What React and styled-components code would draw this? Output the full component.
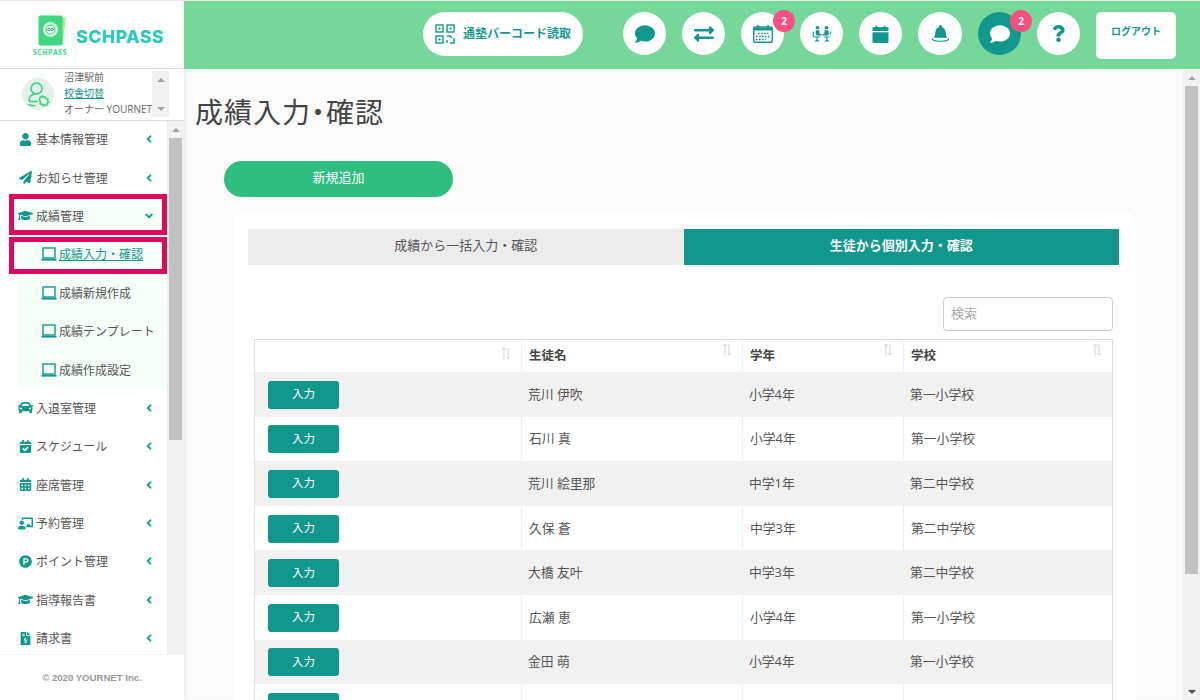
import React from "react";
import styled, { createGlobalStyle } from "styled-components";
import {
  FaUser, FaPaperPlane, FaGraduationCap, FaCar, FaCalendarCheck, FaCalendarAlt,
  FaChalkboardTeacher, FaProductHunt, FaFileInvoiceDollar, FaChevronLeft, FaChevronDown,
  FaComment, FaExchangeAlt, FaQuestion,
} from "react-icons/fa";

const TEAL = "#12978c";
const FONT = `"Open Sans", "Noto Sans CJK JP", sans-serif`;

const Global = createGlobalStyle`
  html, body { margin: 0; height: 100%; overflow: hidden; }
  body { font-family: ${FONT}; color: #555; background: #fafafa; }
  * { box-sizing: border-box; }
`;

const RailTrack = styled.div`
  width: 17px;
  flex: none;
  background: #f1f1f1;
  display: flex;
  flex-direction: column;
`;
const RailFill = styled.div`
  flex: 1;
`;
const RailThumb = styled.div`
  height: ${(p) => p.$h}px;
  margin: 0 2px;
  flex: none;
  background: #c1c1c1;
`;
const RailArrow = styled.div`
  height: 17px;
  flex: none;
  display: flex;
  align-items: center;
  justify-content: center;
  &::before {
    content: "";
    border-left: 4px solid transparent;
    border-right: 4px solid transparent;
    ${(p) => (p.$down ? "border-top" : "border-bottom")}: 4px solid ${(p) => (p.$dark ? "#505050" : "#a3a3a3")};
  }
`;
const Rail = ({ thumb, noEnd, darkEnd }) => (
  <RailTrack>
    <RailArrow />
    {thumb ? <RailThumb $h={thumb} /> : null}
    <RailFill />
    {noEnd ? null : <RailArrow $down $dark={darkEnd} />}
  </RailTrack>
);

const Shell = styled.div`
  height: 100vh;
  display: flex;
  flex-direction: column;
  border-top: 1px solid #e6e6e6;
`;
const Header = styled.header`
  height: 68px;
  flex: none;
  display: flex;
`;
const Brand = styled.div`
  width: 184px;
  flex: none;
  background: #fff;
  border-bottom: 1px solid #ddd;
  display: flex;
  align-items: center;
  padding: 0 0 0 33px;
`;
const LogoMark = styled.div`
  width: 34px;
  display: flex;
  flex-direction: column;
  align-items: flex-start;
  padding-top: 1px;
  svg { margin-left: 5px; }
`;
const LogoSmall = styled.span`
  font: 800 6.5px "Lato", sans-serif;
  letter-spacing: 0.8px;
  color: #3fd487;
  margin-top: 2px;
  white-space: nowrap;
`;
const Wordmark = styled.span`
  font: 800 17.5px "Inter", sans-serif;
  letter-spacing: 0.6px;
  color: #2cc9bb;
  margin-left: 9px;
  margin-top: 4px;
`;
const TopBar = styled.div`
  flex: 1;
  background: #75d79a;
  display: flex;
  align-items: flex-start;
  padding: 11px 0 0 239px;
  gap: 16px;
`;
const ScanPill = styled.button`
  width: 160px;
  height: 44px;
  margin-right: 24px;
  border: 0;
  border-radius: 22px;
  background: #fff;
  color: ${TEAL};
  font: 700 12px ${FONT};
  display: flex;
  align-items: center;
  padding: 0 0 0 12px;
  gap: 8px;
  white-space: nowrap;
`;
const ScanLabel = styled.span`
  margin-top: -3px;
`;
const RoundBtn = styled.button`
  position: relative;
  width: ${(p) => (p.$wide ? 44 : 43)}px;
  height: 43px;
  flex: none;
  border: 0;
  padding: 0;
  border-radius: 50%;
  background: ${(p) => (p.$active ? TEAL : "#fff")};
  color: ${(p) => (p.$active ? "#fff" : TEAL)};
  display: flex;
  align-items: center;
  justify-content: center;
`;
const Badge = styled.span`
  position: absolute;
  top: -2px;
  right: -11px;
  width: 22px;
  height: 22px;
  border-radius: 50%;
  background: #f9507f;
  color: #fff;
  font: 700 10px/22px "Open Sans", sans-serif;
  text-align: center;
`;
const Logout = styled.button`
  width: 80px;
  height: 47px;
  border: 0;
  border-radius: 5px;
  background: #fff;
  color: ${TEAL};
  font: 700 10px ${FONT};
  padding: 0 0 10px;
`;
const Body = styled.div`
  flex: 1;
  min-height: 0;
  display: flex;
`;
const Sidebar = styled.aside`
  width: 184px;
  flex: none;
  background: #fff;
  display: flex;
  flex-direction: column;
`;
const UserBlock = styled.div`
  height: 52px;
  flex: none;
  padding: 2px 15px 3px 22px;
  border-bottom: 1px solid #ddd;
  display: flex;
`;
const Avatar = styled.div`
  width: 32px;
  height: 32px;
  flex: none;
  align-self: center;
  border-radius: 50%;
  background: #e3f1e8;
`;
const UserInfo = styled.div`
  flex: 1;
  min-width: 0;
  overflow: hidden;
  margin-left: 10px;
  font-size: 10px;
  line-height: 16px;
  margin-top: -2px;
  white-space: nowrap;
  color: #666;
`;
const SwitchLink = styled.a`
  display: block;
  color: ${TEAL};
  text-decoration: underline;
`;
const NavPane = styled.div`
  flex: 1;
  min-height: 0;
  display: flex;
`;
const NavList = styled.nav`
  flex: 1;
  min-width: 0;
  overflow: hidden;
  margin-top: -1px;
`;
const MenuRow = styled.div`
  position: relative;
  height: 38.4px;
  display: flex;
  align-items: center;
  margin-left: ${(p) => (p.$open ? "14px" : 0)};
  padding-left: ${(p) => (p.$open ? "4px" : "18px")};
  background: ${(p) => (p.$open ? "#f5fff8" : "transparent")};
  font-size: 12px;
  color: #555;
  ${(p) =>
    p.$open
      ? `&::after {
          content: "";
          position: absolute;
          top: -3px; bottom: 0; left: -5px; right: 0;
          border: 5px solid #dc0a5f;
        }`
      : ""}
`;
const MenuIcon = styled.span`
  width: 15px;
  flex: none;
  display: flex;
  justify-content: center;
  color: ${TEAL};
  font-size: ${(p) => p.$size || 13}px;
  margin-right: 3px;
`;
const MenuLabel = styled.span`
  flex: 1;
  white-space: nowrap;
`;
const Caret = styled.span`
  width: 9px;
  margin-right: 14px;
  flex: none;
  display: flex;
  justify-content: center;
  color: ${TEAL};
  font-size: 8px;
  svg { stroke: currentColor; stroke-width: 50px; }
`;
const SubRow = styled.div`
  position: relative;
  height: 38.4px;
  margin-left: 19px;
  background: #f5fff8;
  display: flex;
  align-items: center;
  padding-left: 22px;
  gap: 2px;
  font-size: 12px;
  white-space: nowrap;
  color: ${(p) => (p.$active ? TEAL : "#555")};
  text-decoration: ${(p) => (p.$active ? "underline" : "none")};
  ${(p) =>
    p.$active
      ? `&::after {
          content: "";
          position: absolute;
          top: 2px; bottom: 0; left: -10px; right: 0;
          border: 5px solid #dc0a5f;
        }`
      : ""}
`;
const SideFoot = styled.footer`
  height: 46px;
  flex: none;
  border-top: 1px solid #f2f2f2;
  display: flex;
  align-items: center;
  justify-content: center;
  font: 700 9.6px "Liberation Sans", sans-serif;
  color: #999;
`;
const MainPane = styled.div`
  flex: 1;
  min-width: 0;
  display: flex;
`;
const Main = styled.main`
  flex: 1;
  min-width: 0;
  overflow: hidden;
  background: #fafafa;
  box-shadow: inset 6px 0 6px -4px rgba(0, 0, 0, 0.06);
  padding: 23px 47px 32px 11px;
`;
const Title = styled.h1`
  margin: 0;
  height: 40px;
  font-size: 28px;
  line-height: 40px;
  font-weight: 400;
  letter-spacing: 1px;
  color: #444;
  font-feature-settings: "palt";
`;
const AddBtn = styled.button`
  display: block;
  width: 229px;
  height: 36px;
  margin: 29px 0 0 29px;
  border: 0;
  border-radius: 18px;
  background: #2fbd80;
  color: #fff;
  font: 400 13px ${FONT};
  padding: 0 0 5px;
`;
const Card = styled.section`
  margin: 16px 0 0 38px;
  background: #fff;
  border-radius: 10px;
  padding: 16px 17px 85px 15px;
`;
const Tabs = styled.div`
  display: flex;
  height: 36px;
`;
const Tab = styled.button`
  flex: 1;
  border: 0;
  padding: 0 0 5px;
  background: ${(p) => (p.$on ? TEAL : "#ececec")};
  color: ${(p) => (p.$on ? "#fff" : "#555")};
  font: ${(p) => (p.$on ? 700 : 400)} 13px ${FONT};
`;
const SearchRow = styled.div`
  display: flex;
  justify-content: flex-end;
  padding: 32px 6px 8px 0;
`;
const Search = styled.input`
  width: 170px;
  height: 34px;
  border: 1px solid #ccc;
  border-radius: 4px;
  padding: 0 7px 3px;
  font: 400 13px ${FONT};
  outline: 0;
  &::placeholder { color: #aaa; opacity: 1; }
`;
const Table = styled.table`
  width: 859px;
  margin-left: 6px;
  table-layout: fixed;
  border-collapse: separate;
  border-spacing: 0;
  border-top: 1px solid #ddd;
  border-left: 1px solid #ddd;
  border-right: 1px solid #ddd;
  font-size: 12.8px;
  color: #555;
`;
const Th = styled.th`
  height: 32px;
  padding: 0 8px 4px 7px;
  border-left: ${(p) => (p.$first ? 0 : "1px solid #f0f0f0")};
  text-align: left;
  font-weight: 700;
  font-size: 12.5px;
  color: #444;
`;
const ThInner = styled.div`
  display: flex;
  justify-content: space-between;
  align-items: flex-start;
`;
const SortMark = styled.svg`
  width: 10px;
  height: 13px;
  margin: -2px 2px 0 0;
  flex: none;
  margin-left: auto;
`;
const Tr = styled.tr`
  background: ${(p) => (p.$odd ? "#f1f1f1" : "#fff")};
`;
const Td = styled.td`
  height: 44.6px;
  padding: 0 7px 2px;
  border-left: ${(p) => (p.$odd ? 0 : "1px solid #f0f0f0")};
`;
const ActionTd = styled.td`
  height: 44.6px;
  padding: 1px 7px 0 13px;
`;
const EntryBtn = styled.button`
  display: block;
  width: 71px;
  height: 28px;
  border: 0;
  border-radius: 3px;
  background: ${TEAL};
  color: #fff;
  font: 400 11.5px ${FONT};
  padding: 0 0 3px;
`;

const QrIcon = () => (
  <svg width="20" height="20" viewBox="0 0 20 20" fill="none" stroke={TEAL} strokeWidth="1.4">
    <rect x="1" y="1" width="7" height="7" /><rect x="12" y="1" width="7" height="7" /><rect x="1" y="12" width="7" height="7" />
    <rect x="3.5" y="3.5" width="2" height="2" fill={TEAL} stroke="none" />
    <rect x="14.5" y="3.5" width="2" height="2" fill={TEAL} stroke="none" />
    <rect x="3.5" y="14.5" width="2" height="2" fill={TEAL} stroke="none" />
    <path d="M12 12h3l2 2M19 14v5h-4M12 16v3" />
  </svg>
);
const CalendarIcon = () => (
  <svg width="20" height="18" viewBox="0 0 20 18" fill="none" stroke={TEAL}>
    <rect x="0.7" y="2" width="18.6" height="15.3" rx="1.5" strokeWidth="1.4" />
    <path d="M1 4.200h18" strokeWidth="2.600" />
    <path d="M5 0v3M15 0v3" strokeWidth="1.500" />
    <path d="M5 8.500h10.500M3 11.500h13.500M3 14.500h10" strokeWidth="1.700" strokeDasharray="1.700 1.300" />
  </svg>
);
const MeetingIcon = () => (
  <svg width="20" height="16" viewBox="0 0 20 19" preserveAspectRatio="none" fill={TEAL}>
    <circle cx="5.500" cy="2" r="1.900" /><circle cx="14.500" cy="2" r="1.900" />
    <path d="M3.700 5h3.600l.4 4.200 1.800.3v1.700H5a1.300 1.300 0 0 1-1.300-1.300z" />
    <path d="M16.300 5h-3.600l-.4 4.200-1.800.3v1.700h5a1.300 1.300 0 0 0 1.300-1.300z" />
    <path d="M.6 6.500h1.200v5c0 .7.300 1 1 1h5.400v1.200H5.600v2.800l2 1.200v.6H2.500v-.6l2-1.200v-2.800H2.600c-1.300 0-2-.7-2-2z" />
    <path d="M19.400 6.500h-1.200v5c0 .7-.3 1-1 1h-5.400v1.200h2.600v2.800l-2 1.200v.6h5.100v-.6l-2-1.200v-2.800h.9c1.300 0 2-.7 2-2z" />
  </svg>
);
const BoxIcon = () => (
  <svg width="17" height="18" viewBox="0 0 17 18" fill={TEAL}>
    <path d="M4 0l1.500 2h6L13 0l.5 2H15.500a1 1 0 0 1 1 1v3H.5V3a1 1 0 0 1 1-1H3.500z" />
    <path d="M.5 7.200h16V17a1 1 0 0 1-1 1h-14a1 1 0 0 1-1-1z" />
  </svg>
);
const BellIcon = () => (
  <svg width="19" height="17" viewBox="0 0 20 18" fill={TEAL}>
    <circle cx="10" cy="1.600" r="1.500" />
    <path d="M10 2c4 0 5.500 3.500 5.500 6.500 0 2 .8 3.500 1.800 5H2.700c1-1.500 1.800-3 1.800-5C4.500 5.500 6 2 10 2z" />
    <path d="M1 14c0 2.500 5 3.200 9 3.200s9-.7 9-3.200" fill="none" stroke={TEAL} strokeWidth="1.200" />
  </svg>
);
const AvatarIcon = () => (
  <svg width="32" height="32" viewBox="0 0 32 32" fill="none" stroke="#3fd487" strokeWidth="1.600" strokeLinecap="round">
    <circle cx="14.500" cy="10.500" r="5.500" />
    <path d="M14 16c-4 0-7 2.500-7 6 0 1 .8 1.500 2 1.500h6" />
    <path d="M7 26.500c2 1.200 4 1.500 6 1" />
    <path d="M18 19.500l2-1.500 1 1.500 2-.8.800 1.800 2 .2-.3 2 1.200 1.300-1.500 1.200-.4 2-2-.4-1.500 1-1-1.600-2-.4.300-2-1-1.500z" />
  </svg>
);
const LogoIcon = () => (
  <svg width="28" height="32" viewBox="0 0 28 32">
    <path d="M24 2l4 .8-3.500 27H24z" fill="#a9ec8f" />
    <rect x="0.500" y="0.500" width="24" height="30" rx="2" fill="#3fd77f" />
    <circle cx="12.500" cy="14.500" r="7.500" fill="#d8f6e2" />
    <circle cx="12.500" cy="14.500" r="5" fill="#3fd77f" />
    <circle cx="12.500" cy="14.500" r="4" fill="#eafbef" />
    <path d="M9.500 14.500c1-1.500 2-1.500 3 0s2 1.500 3 0c-1-1.500-2-1.500-3 0s-2 1.500-3 0z" fill="none" stroke="#169a6c" strokeWidth="1" />
  </svg>
);
const LaptopIcon = () => (
  <svg width="16" height="14" viewBox="0 0 16 14" fill="none" stroke={TEAL}>
    <rect x="2" y="1" width="12" height="10" strokeWidth="1.400" />
    <path d="M0.500 12.700h15" strokeWidth="1.800" />
  </svg>
);
const Sort = () => (
  <SortMark viewBox="0 0 10 13" fill="none" stroke="#d4d4d4" strokeWidth="1">
    <path d="M3 12.500V1M1 3l2-2.200L5 3" />
    <path d="M7 1v11M5.500 10l1.500 2 1.500-2" />
  </SortMark>
);

const menuTop = [
  [FaUser, "基本情報管理"],
  [FaPaperPlane, "お知らせ管理"],
];
const subs = ["成績入力・確認", "成績新規作成", "成績テンプレート", "成績作成設定"];
const menuBottom = [
  [FaCar, "入退室管理", 15],
  [FaCalendarCheck, "スケジュール"],
  [FaCalendarAlt, "座席管理"],
  [FaChalkboardTeacher, "予約管理", 15],
  [FaProductHunt, "ポイント管理"],
  [FaGraduationCap, "指導報告書", 15],
  [FaFileInvoiceDollar, "請求書"],
];
const students = [
  ["荒川 伊吹", "小学4年", "第一小学校"],
  ["石川 真", "小学4年", "第一小学校"],
  ["荒川 絵里那", "中学1年", "第二中学校"],
  ["久保 蒼", "中学3年", "第二中学校"],
  ["大橋 友叶", "中学3年", "第二中学校"],
  ["広瀬 恵", "小学4年", "第一小学校"],
  ["金田 萌", "小学4年", "第一小学校"],
];

const Item = ({ icon: Icon, label, size }) => (
  <MenuRow>
    <MenuIcon $size={size}><Icon /></MenuIcon>
    <MenuLabel>{label}</MenuLabel>
    <Caret><FaChevronLeft /></Caret>
  </MenuRow>
);

export default function App() {
  return (
    <Shell>
      <Global />
      <Header>
        <Brand>
          <LogoMark>
            <LogoIcon />
            <LogoSmall>SCHPASS</LogoSmall>
          </LogoMark>
          <Wordmark>SCHPASS</Wordmark>
        </Brand>
        <TopBar>
          <ScanPill><QrIcon /><ScanLabel>通塾バーコード読取</ScanLabel></ScanPill>
          <RoundBtn><FaComment size={20} /></RoundBtn>
          <RoundBtn><FaExchangeAlt size={20} /></RoundBtn>
          <RoundBtn><CalendarIcon /><Badge>2</Badge></RoundBtn>
          <RoundBtn><MeetingIcon /></RoundBtn>
          <RoundBtn><BoxIcon /></RoundBtn>
          <RoundBtn $wide><BellIcon /></RoundBtn>
          <RoundBtn $active><FaComment size={20} /><Badge>2</Badge></RoundBtn>
          <RoundBtn><FaQuestion size={17} /></RoundBtn>
          <Logout>ログアウト</Logout>
        </TopBar>
      </Header>
      <Body>
        <Sidebar>
          <UserBlock>
            <Avatar><AvatarIcon /></Avatar>
            <UserInfo>
              沼津駅前
              <SwitchLink>校舎切替</SwitchLink>
              オーナー YOURNET
            </UserInfo>
            <Rail />
          </UserBlock>
          <NavPane>
            <NavList>
              {menuTop.map(([I, l]) => <Item key={l} icon={I} label={l} />)}
              <MenuRow $open>
                <MenuIcon $size={15}><FaGraduationCap /></MenuIcon>
                <MenuLabel>成績管理</MenuLabel>
                <Caret><FaChevronDown /></Caret>
              </MenuRow>
              {subs.map((s, i) => (
                <SubRow key={s} $active={i === 0}><LaptopIcon />{s}</SubRow>
              ))}
              {menuBottom.map(([I, l, z]) => <Item key={l} icon={I} label={l} size={z} />)}
            </NavList>
            <Rail thumb={302} noEnd />
          </NavPane>
          <SideFoot>© 2020 YOURNET Inc.</SideFoot>
        </Sidebar>
        <MainPane>
          <Main>
            <Title>成績入力・確認</Title>
            <AddBtn>新規追加</AddBtn>
            <Card>
              <Tabs>
                <Tab>成績から一括入力・確認</Tab>
                <Tab $on>生徒から個別入力・確認</Tab>
              </Tabs>
              <SearchRow><Search placeholder="検索" /></SearchRow>
              <Table>
                <colgroup>
                  <col style={{ width: 266 }} /><col style={{ width: 221 }} /><col style={{ width: 161 }} /><col />
                </colgroup>
                <thead>
                  <tr>
                    <Th $first><ThInner><Sort /></ThInner></Th>
                    <Th><ThInner>生徒名<Sort /></ThInner></Th>
                    <Th><ThInner>学年<Sort /></ThInner></Th>
                    <Th><ThInner>学校<Sort /></ThInner></Th>
                  </tr>
                </thead>
                <tbody>
                  {students.map((s, i) => (
                    <Tr key={i} $odd={i % 2 === 0}>
                      <ActionTd><EntryBtn>入力</EntryBtn></ActionTd>
                      {s.map((c, j) => <Td key={j} $odd={i % 2 === 0}>{c}</Td>)}
                    </Tr>
                  ))}
                  <Tr $odd={false}>
                    <ActionTd><EntryBtn aria-label="入力" /></ActionTd>
                    <Td /><Td /><Td />
                  </Tr>
                </tbody>
              </Table>
            </Card>
          </Main>
          <Rail thumb={488} darkEnd />
        </MainPane>
      </Body>
    </Shell>
  );
}
